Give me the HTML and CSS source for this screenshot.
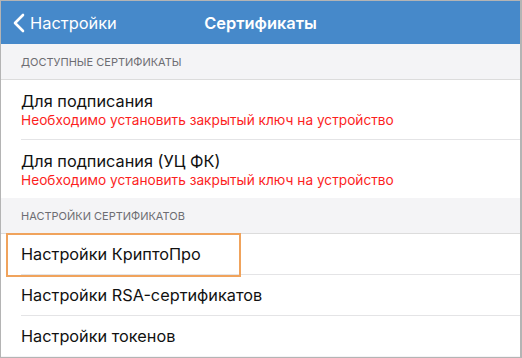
FILE: index.html
```html
<!DOCTYPE html>
<html lang="ru">
<head>
  <meta charset="UTF-8">
  <title>Сертификаты</title>
  <link rel="stylesheet" href="styles.css">
</head>
<body>
  <div class="screen">
    <!-- Nav bar -->
    <div class="navbar">
      <div class="back">
        <svg class="chevron" width="12" height="20" viewBox="0 0 12 20">
          <path d="M10 2 L2 10 L10 18" fill="none" stroke="#fff" stroke-width="2.6" stroke-linecap="round" stroke-linejoin="round"/>
        </svg>
        <span>Настройки</span>
      </div>
      <div class="title">Сертификаты</div>
    </div>

    <div class="section-header">Доступные сертификаты</div>
    <div class="group">
      <div class="row row-double">
        <div class="row-title">Для подписания</div>
        <div class="row-error">Необходимо установить закрытый ключ на устройство</div>
      </div>
      <div class="row row-double">
        <div class="row-title">Для подписания (УЦ ФК)</div>
        <div class="row-error">Необходимо установить закрытый ключ на устройство</div>
      </div>
    </div>

    <div class="section-header">Настройки сертификатов</div>
    <div class="group">
      <div class="row">
        <div class="row-title">Настройки КриптоПро</div>
        <div class="highlight"></div>
      </div>
      <div class="row">
        <div class="row-title">Настройки RSA-сертификатов</div>
      </div>
      <div class="row">
        <div class="row-title">Настройки токенов</div>
      </div>
    </div>
  </div>
</body>
</html>
```

FILE: styles.css
```css
body {
  margin: 0;
  padding: 0;
  background-color: #fff;
  font-family: Inter, "Noto Sans", sans-serif;
}
.screen {
  width: 519px;
  height: 356px;
  border: 1px solid #b4b4b4;
  border-right-width: 2px;
  overflow: hidden;
  background-color: #f4f4f6;
}
.navbar {
  position: relative;
  height: 43px;
  background-color: #4689ca;
  color: #fff;
  display: flex;
  align-items: center;
  justify-content: center;
}
.back {
  position: absolute;
  left: 12px;
  top: 0;
  height: 43px;
  display: flex;
  align-items: center;
  gap: 5px;
  font-size: 16.4px;
}
.chevron {
  display: block;
}
.title {
  font-size: 16.4px;
  font-weight: 600;
}
.section-header {
  height: 36px;
  box-sizing: border-box;
  padding-left: 20px;
  display: flex;
  align-items: center;
  font-size: 11px;
  color: #6d6d72;
  text-transform: uppercase;
  border-bottom: 1px solid #dcdcdc;
}
.group {
  background-color: #fff;
}
.row {
  position: relative;
  height: 40px;
  margin-left: 20px;
  display: flex;
  flex-direction: column;
  justify-content: center;
  border-bottom: 1px solid #e4e4e6;
}
.row:last-child {
  border-bottom: none;
}
.row-double {
  height: 60px;
  box-sizing: border-box;
  justify-content: flex-start;
  padding-top: 11px;
}
.row-double:last-child {
  height: 58px;
}
.row-title {
  font-size: 16.3px;
  line-height: 20px;
  color: #111;
}
.row-error {
  margin-top: 1px;
  font-size: 13.7px;
  line-height: 17px;
  color: #fc1f1f;
}
.highlight {
  position: absolute;
  left: -15px;
  top: -1px;
  width: 231px;
  height: 40px;
  border: 2.5px solid #f0a35c;
}
```
